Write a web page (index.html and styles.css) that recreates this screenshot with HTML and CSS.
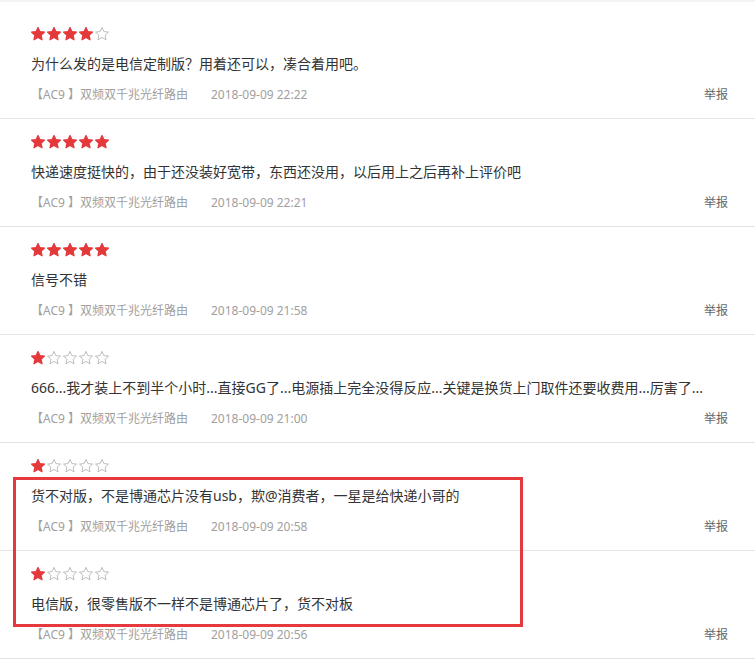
FILE: index.html
```html
<!DOCTYPE html>
<html lang="zh-CN">

<head>
    <meta charset="UTF-8">
    <meta name="viewport" content="width=device-width, initial-scale=1.0">
    <title>商品评价</title>
    <link rel="stylesheet" href="styles.css">
</head>

<body>
    <svg class="defs" width="0" height="0">
        <defs>
            <path id="star" d="M7 0.4 L8.9 4.6 L13.5 5.1 L10.1 8.2 L11.05 12.8 L7 10.45 L2.95 12.8 L3.9 8.2 L0.5 5.1 L5.1 4.6 Z" />
        </defs>
    </svg>
    <div class="top-band"></div>
    <div class="reviews" id="reviews"></div>
    <div class="highlight"></div>

    <script>
        const reviews = [
            { score: 4, text: '为什么发的是电信定制版？用着还可以，凑合着用吧。', time: '2018-09-09 22:22' },
            { score: 5, text: '快递速度挺快的，由于还没装好宽带，东西还没用，以后用上之后再补上评价吧', time: '2018-09-09 22:21' },
            { score: 5, text: '信号不错', time: '2018-09-09 21:58' },
            { score: 1, text: '666...我才装上不到半个小时...直接GG了...电源插上完全没得反应...关键是换货上门取件还要收费用...厉害了...', time: '2018-09-09 21:00' },
            { score: 1, text: '货不对版，不是博通芯片没有usb，欺@消费者，一星是给快递小哥的', time: '2018-09-09 20:58' },
            { score: 1, text: '电信版，很零售版不一样不是博通芯片了，货不对板', time: '2018-09-09 20:56' }
        ];

        function stars(score) {
            let html = '';
            for (let i = 0; i < 5; i++) {
                const cls = i < score ? 'on' : 'off';
                html += `<svg class="star ${cls}" width="14" height="14" viewBox="0 0 14 14"><use href="#star"/></svg>`;
            }
            return html;
        }

        const list = document.getElementById('reviews');
        list.innerHTML = reviews.map(r => `
            <div class="review">
                <div class="stars">${stars(r.score)}</div>
                <div class="content">${r.text}</div>
                <div class="meta">
                    <span class="product">【AC9 】双频双千兆光纤路由</span>
                    <span class="time">${r.time}</span>
                    <a class="report">举报</a>
                </div>
            </div>`).join('');
    </script>
</body>

</html>
```

FILE: styles.css
```css
body {
    margin: 0;
    background: #fff;
    font-family: "Microsoft YaHei", "Noto Sans", "Noto Sans CJK SC", sans-serif;
    position: relative;
}

.defs {
    position: absolute;
}

.top-band {
    height: 2px;
    background: #f3f3f3;
}

.reviews {
    margin-top: 9px;
}

.review {
    padding: 16px 27px 13px 31px;
    border-bottom: 1px solid #e3e3e3;
}

.stars {
    display: flex;
    gap: 2px;
    height: 14px;
}

.star.on {
    fill: #e4393c;
    stroke: #e4393c;
    stroke-width: 1.2;
    stroke-linejoin: round;
}

.star.off {
    fill: #fff;
    stroke: #b5b5b5;
    stroke-width: 0.9;
    stroke-linejoin: round;
}

.content {
    margin-top: 13px;
    font-size: 14px;
    line-height: 20px;
    color: #333;
}

.meta {
    margin-top: 11px;
    display: flex;
    align-items: center;
    font-size: 12px;
    line-height: 20px;
    color: #a0a0a0;
}

.product {
    width: 180px;
}

.report {
    margin-left: auto;
    color: #666;
    cursor: pointer;
}

.highlight {
    position: absolute;
    left: 13px;
    top: 477px;
    width: 504px;
    height: 144px;
    border: 3px solid #e5393d;
}
```
